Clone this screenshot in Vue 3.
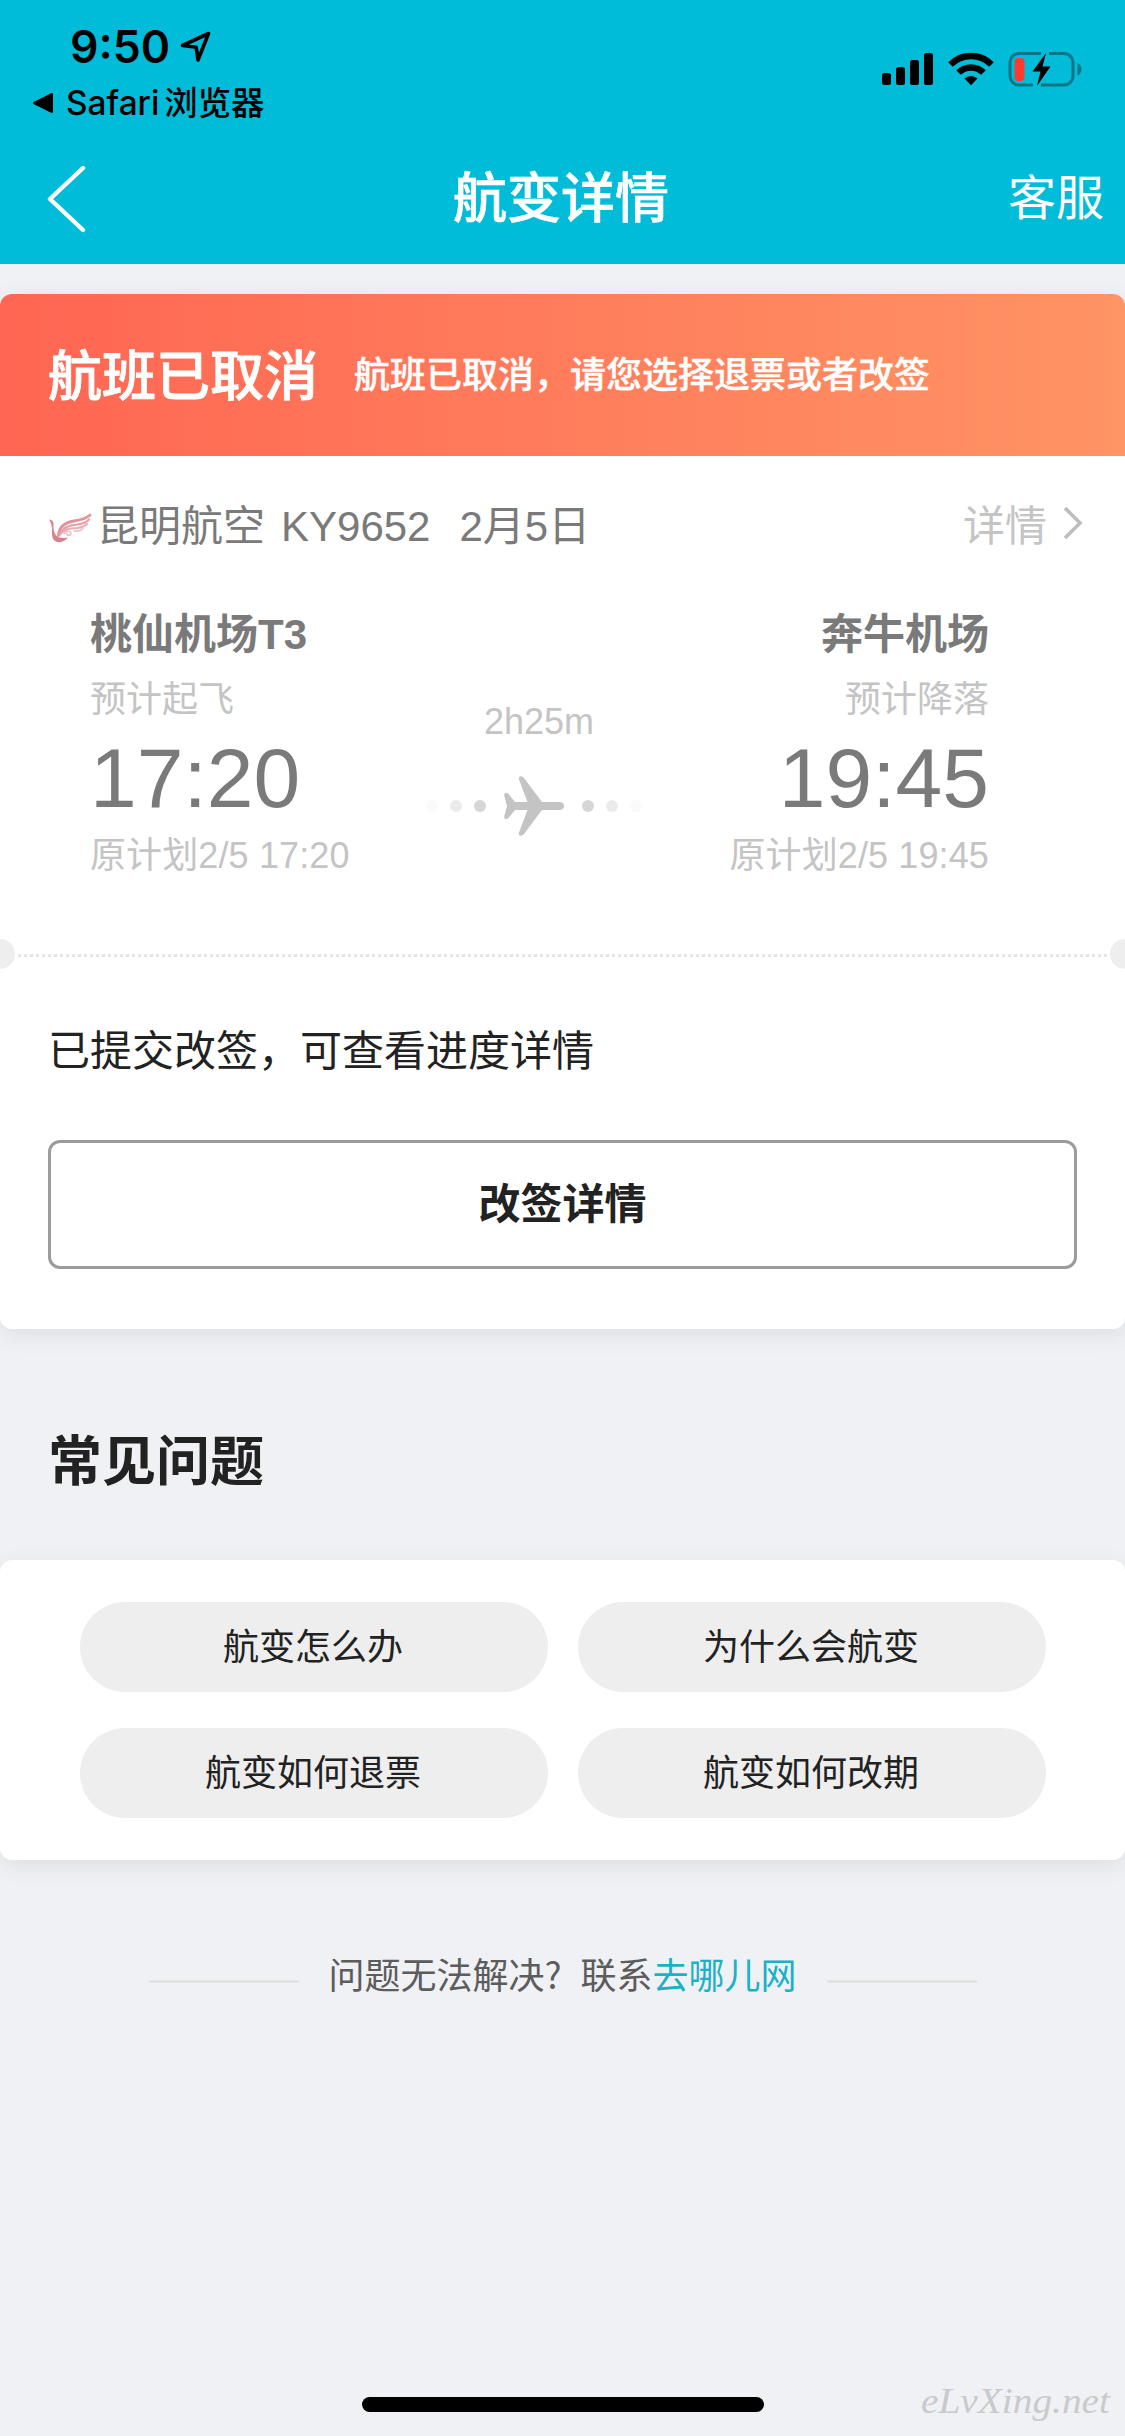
<script setup>
import { ref } from 'vue';

const flight = ref({
    airline: '昆明航空',
    number: 'KY9652',
    date: '2月5日',
    duration: '2h25m',
});

const departure = ref({
    airport: '桃仙机场T3',
    label: '预计起飞',
    time: '17:20',
    planned: '原计划2/5 17:20',
});

const arrival = ref({
    airport: '奔牛机场',
    label: '预计降落',
    time: '19:45',
    planned: '原计划2/5 19:45',
});

const questions = ['航变怎么办', '为什么会航变', '航变如何退票', '航变如何改期'];
</script>

<template>
    <div class="page">
        <header class="header">
            <div class="status-bar">
                <div class="status-left">
                    <div class="clock">
                        <span>9:50</span>
                        <svg width="32" height="32" viewBox="0 0 32 32">
                            <path
                                d="M2.5 14.5 L28.5 2.5 L18 29 L16.2 16.2 Z"
                                fill="none"
                                stroke="#000"
                                stroke-width="3.6"
                                stroke-linejoin="round"
                            />
                        </svg>
                    </div>
                    <div class="back-app">
                        <svg width="22" height="22" viewBox="0 0 22 22">
                            <path
                                d="M2 11 L20 2 V20 Z"
                                stroke="#000"
                                stroke-width="2"
                                stroke-linejoin="round"
                            />
                        </svg>
                        <span>Safari<i>浏览器</i></span>
                    </div>
                </div>
                <div class="status-right">
                    <svg width="52" height="33" viewBox="0 0 52 33">
                        <rect x="0" y="21" width="9" height="12" rx="2.5" />
                        <rect x="14" y="15" width="9" height="18" rx="2.5" />
                        <rect x="28" y="8" width="9" height="25" rx="2.5" />
                        <rect x="42" y="1" width="9" height="32" rx="2.5" />
                    </svg>
                    <svg class="wifi" width="46" height="34" viewBox="0 0 46 34">
                        <g fill="none" stroke="#000" stroke-width="6.4">
                            <path d="M2.5 12.5 A29 29 0 0 1 43.5 12.5" />
                            <path d="M10.5 20.6 A17.7 17.7 0 0 1 35.5 20.6" />
                        </g>
                        <path d="M16.5 26.6 A9.2 9.2 0 0 1 29.5 26.6 L23 33.2 Z" />
                    </svg>
                    <svg class="battery" width="74" height="36" viewBox="0 0 74 36">
                        <g fill="none" stroke="#0a7585" stroke-width="3">
                            <path d="M33 2.5 H11 A9 9 0 0 0 2 11.5 V25 A9 9 0 0 0 11 34 H25" />
                            <path d="M41 2.5 H56 A9 9 0 0 1 65 11.5 V25 A9 9 0 0 1 56 34 H33" />
                        </g>
                        <path d="M69.5 12 Q73.5 14 73.5 18 Q73.5 22 69.5 25 Z" fill="#0a7585" />
                        <rect x="6.5" y="7" width="10" height="23" rx="4" fill="#ff3b30" />
                        <path d="M38 2 L24.5 20.5 H32.5 L29 35 L42.5 15.5 H34.5 Z" />
                    </svg>
                </div>
            </div>
            <nav class="nav-bar">
                <svg width="40" height="68" viewBox="0 0 40 68">
                    <path
                        d="M37 3 L4 34 L37 65"
                        fill="none"
                        stroke="#fff"
                        stroke-width="4.4"
                        stroke-linecap="round"
                        stroke-linejoin="round"
                    />
                </svg>
                <h1>航变详情</h1>
                <a class="service">客服</a>
            </nav>
        </header>

        <section class="card flight-card">
            <div class="banner">
                <strong>航班已取消</strong>
                <span>航班已取消，请您选择退票或者改签</span>
            </div>

            <div class="flight-row">
                <svg class="airline-logo" width="44" height="34" viewBox="0 0 44 34">
                    <path
                        d="M1 9.5 Q4.5 9.5 5.5 13 Q4.5 24 10 27 Q14 28.5 20 27.5 Q15 33 9.5 32 Q3.5 30.5 4 23 Q4.5 14 1 9.5 Z"
                        fill="#dd7f88"
                    />
                    <g fill="none" stroke-linecap="round">
                        <path
                            d="M10.5 25.5 C11 17 17 12.5 26 11 C33 10 38 8.5 42 5"
                            stroke="#e2939b"
                            stroke-width="2.8"
                        />
                        <path
                            d="M12 24.5 C15 16.5 22 15 29 14.5 C34 14 38.5 12.5 41 9.5"
                            stroke="#e6a0a7"
                            stroke-width="2.2"
                        />
                        <path
                            d="M14 22.5 C19 17.5 24 18.5 29 18 C33 17.5 36.5 16.5 39 14"
                            stroke="#e9abb1"
                            stroke-width="2"
                        />
                        <path
                            d="M16 24 C18 20.5 23 20.5 23 23.5 C22.5 26 18.5 26 19 23.5 M26 21 C30 21.5 33 20.5 35 18.5"
                            stroke="#efc0c4"
                            stroke-width="1.6"
                        />
                    </g>
                </svg>
                <span class="airline">{{ flight.airline }}</span>
                <span class="number">{{ flight.number }}</span>
                <span>{{ flight.date }}</span>
                <a class="detail">
                    详情
                    <svg width="20" height="34" viewBox="0 0 20 34">
                        <path d="M2 2 L17 17 L2 32" fill="none" stroke="#bdbdbd" stroke-width="3.6" />
                    </svg>
                </a>
            </div>

            <div class="schedule">
                <div class="endpoint">
                    <b>{{ departure.airport }}</b>
                    <small>{{ departure.label }}</small>
                    <time>{{ departure.time }}</time>
                    <small class="planned">{{ departure.planned }}</small>
                </div>
                <div class="route">
                    <span>{{ flight.duration }}</span>
                    <div class="track">
                        <div class="dots"><i></i><i></i><i></i></div>
                        <svg width="60" height="60" viewBox="0 0 60 60" fill="#c4c4c4">
                            <path
                                d="M56 26 H38 L20 2 Q18 -0.5 15.5 0.5 Q14.5 1.5 15 3.5 L23.5 26 H11 L4.5 18 Q2.5 16 0.5 17.5 Q0 18.5 0.3 20 L3 30 L0.3 40 Q0 42 1 43 Q3 43.5 4.5 42 L11 34 H23.5 L15 56.5 Q14.5 58.5 15.5 59.5 Q18 60.5 20 58 L38 34 H56 Q60 33.5 60 30 Q60 26.5 56 26 Z"
                            />
                        </svg>
                        <div class="dots reverse"><i></i><i></i><i></i></div>
                    </div>
                </div>
                <div class="endpoint right">
                    <b>{{ arrival.airport }}</b>
                    <small>{{ arrival.label }}</small>
                    <time>{{ arrival.time }}</time>
                    <small class="planned">{{ arrival.planned }}</small>
                </div>
            </div>

            <div class="divider">
                <i class="notch"></i>
                <i class="dotted"></i>
                <i class="notch"></i>
            </div>

            <div class="progress">
                <p>已提交改签，可查看进度详情</p>
                <button>改签详情</button>
            </div>
        </section>

        <h2>常见问题</h2>

        <section class="card questions">
            <a v-for="question in questions" :key="question">{{ question }}</a>
        </section>

        <footer class="contact">
            <i></i>
            <p>问题无法解决<span class="mark">?</span>联系<a>去哪儿网</a></p>
            <i></i>
        </footer>

        <div class="bottom">
            <div class="home-indicator"></div>
            <svg class="watermark" width="209" height="64" viewBox="0 0 209 64">
                <text x="5" y="41" textLength="189" lengthAdjust="spacingAndGlyphs">eLvXing.net</text>
            </svg>
        </div>
    </div>
</template>

<style>
body {
    background: #f0f1f4;
}
</style>

<style scoped>
.page {
    display: flex;
    flex-direction: column;
    width: 1125px;
    height: 2436px;
    overflow: hidden;
    background: #f0f1f4;
    color: #222;
    font-family: 'Liberation Sans', 'Noto Sans CJK SC', sans-serif;
    font-size: 42px;
}

h1,
h2,
p {
    margin: 0;
}

i {
    font-style: normal;
}

svg {
    display: block;
    flex: none;
}

.header {
    display: flex;
    flex-direction: column;
    height: 264px;
    background: #00bcd8;
}

.status-bar {
    display: flex;
    justify-content: space-between;
    height: 132px;
    color: #000;
    font-family: Inter, 'Noto Sans CJK SC', sans-serif;
}

.clock {
    display: flex;
    align-items: center;
    column-gap: 10px;
    height: 48px;
    padding: 23px 0 0 70px;
    font-size: 44.5px;
    font-weight: 600;
}

.back-app {
    display: flex;
    align-items: center;
    column-gap: 12px;
    height: 46px;
    padding: 9px 0 0 32px;
    font-size: 33.4px;
    font-weight: 500;
    line-height: 46px;
}

.back-app i {
    margin-left: 5px;
}

.status-right {
    display: flex;
    align-items: flex-start;
    padding: 52px 43px 0 0;
}

.wifi {
    margin-left: 14px;
}

.battery {
    margin: -1px 0 0 14px;
}

.nav-bar {
    display: grid;
    grid-template-columns: 1fr auto 1fr;
    align-items: center;
    height: 132px;
    padding: 2px 21px 0 46px;
    color: #fff;
}

.nav-bar h1 {
    margin-left: -28px;
    font-size: 54px;
    font-weight: 500;
    line-height: 72px;
    -webkit-text-stroke: 0.6px #fff;
}

.service {
    justify-self: end;
    font-size: 48px;
    line-height: 60px;
}

.card {
    border-radius: 12px;
    background: #fff;
    box-shadow: 0 6px 24px rgba(0, 0, 0, 0.08);
}

.flight-card {
    margin-top: 30px;
}

.banner {
    display: flex;
    align-items: center;
    column-gap: 36px;
    height: 162px;
    padding-left: 48px;
    border-radius: 12px 12px 0 0;
    background: linear-gradient(90deg, #ff6653, #ff9464);
    color: #fff;
    font-size: 36px;
    font-weight: 500;
    line-height: 48px;
    -webkit-text-stroke: 0.4px #fff;
}

.banner span {
    margin-top: 1px;
}

.banner strong {
    margin-top: 3px;
    font-size: 54px;
    font-weight: 500;
    line-height: 72px;
    -webkit-text-stroke: 0.8px #fff;
}

.flight-row {
    display: flex;
    align-items: center;
    height: 141px;
    padding: 0 42px 0 48px;
    color: #7a7a7a;
    line-height: 54px;
}

.airline {
    margin-left: 5px;
}

.number {
    margin: 0 29px 0 16px;
}

.detail {
    display: flex;
    align-items: center;
    column-gap: 16px;
    margin-left: auto;
    color: #c4c4c4;
}

.detail svg {
    margin-top: -8px;
}

.schedule {
    display: flex;
    justify-content: space-between;
    padding: 11px 136px 59px 90px;
    color: #7a7a7a;
}

.endpoint {
    display: flex;
    flex-direction: column;
}

.endpoint.right {
    align-items: flex-end;
}

.endpoint b {
    margin-bottom: 14px;
    line-height: 54px;
}

.endpoint small {
    color: #c4c4c4;
    font-size: 36px;
    line-height: 48px;
}

.endpoint .planned {
    letter-spacing: 0.12px;
}

.endpoint time {
    margin: 6px 0;
    font-size: 84px;
    line-height: 96px;
}

.route {
    display: flex;
    flex-direction: column;
    row-gap: 30px;
    margin: 90px 11px 0 0;
    color: #c4c4c4;
    font-size: 36px;
    line-height: 48px;
}

.route > span {
    margin-left: 10px;
    text-align: center;
}

.track,
.dots {
    display: flex;
    align-items: center;
}

.track {
    column-gap: 18px;
}

.dots {
    column-gap: 12px;
}

.dots.reverse {
    flex-direction: row-reverse;
}

.dots i {
    width: 12px;
    height: 12px;
    border-radius: 50%;
    background: #fafafa;
}

.dots i:nth-child(2) {
    background: #ebebeb;
}

.dots i:nth-child(3) {
    background: #d6d6d6;
}

.divider {
    display: flex;
    align-items: center;
    justify-content: space-between;
    height: 30px;
    overflow: hidden;
}

.notch {
    width: 30px;
    height: 30px;
    margin: 0 -15px;
    border-radius: 50%;
    background: #eee;
}

.dotted {
    width: 1089px;
    height: 3px;
    margin-top: 3px;
    background: repeating-linear-gradient(90deg, #e4e4e4 0 3px, #fff 3px 6px);
}

.progress {
    display: flex;
    flex-direction: column;
    row-gap: 58px;
    padding: 53px 48px 60px;
}

.progress p {
    line-height: 60px;
}

.progress button {
    height: 129px;
    padding: 0;
    border: 3px solid #9b9b9b;
    border-radius: 12px;
    background: #fff;
    color: #222;
    font-family: inherit;
    font-size: 42px;
    font-weight: 700;
    line-height: 60px;
}

h2 {
    padding: 97px 48px 62px;
    font-size: 54px;
    font-weight: 700;
    line-height: 72px;
}

.questions {
    display: grid;
    grid-template-columns: 1fr 1fr;
    gap: 36px 30px;
    padding: 42px 79px 42px 80px;
}

.questions a {
    height: 90px;
    padding: 1px 2px 0 0;
    box-sizing: border-box;
    border-radius: 45px;
    background: #eee;
    font-size: 36px;
    line-height: 90px;
    text-align: center;
}

.contact {
    display: flex;
    align-items: center;
    column-gap: 30px;
    padding: 93px 148px 0 149px;
    color: #5c5c5c;
    font-size: 36px;
    line-height: 48px;
}

.contact i {
    flex: 1;
    height: 3px;
    margin-top: 9px;
    background: #e2e3e5;
}

.contact p {
    height: 48px;
    margin-left: -1px;
}

.contact a {
    color: #1db1c8;
}

/* takes the same room as a full-width character */
.mark {
    padding-right: 19px;
    font-family: 'Noto Sans CJK SC', sans-serif;
    line-height: 1;
}

.bottom {
    display: grid;
    grid-template-columns: 1fr 402px 1fr;
    align-items: center;
    height: 64px;
    margin-top: auto;
}

.home-indicator {
    grid-column: 2;
    height: 15px;
    border-radius: 8px;
    background: #000;
}

.watermark {
    justify-self: end;
    fill: #c9cacc;
    font-family: 'Liberation Serif', serif;
    font-size: 36px;
    font-style: italic;
}
</style>
